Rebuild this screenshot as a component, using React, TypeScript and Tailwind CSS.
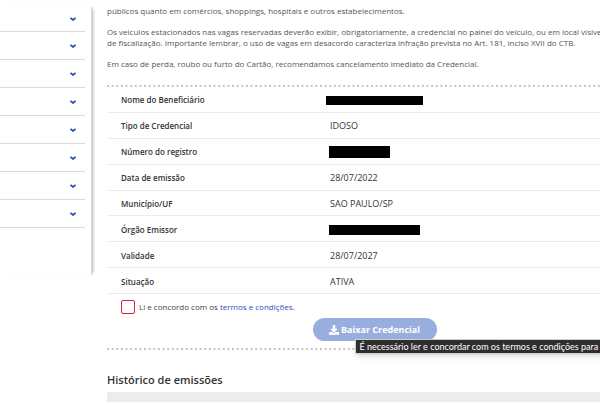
import React from "react";
import { FaDownload } from "react-icons/fa";

const menuItems = [
  "Início",
  "Cadastro",
  "Solicitações",
  "Credenciais",
  "Veículos",
  "Infrações",
  "Notificações",
  "Atendimento",
];

type Row = {
  label: string;
  value?: string;
  redacted?: string;
};

const rows: Row[] = [
  { label: "Nome do Beneficiário", redacted: "-ml-1 h-[9px] w-[97px]" },
  { label: "Tipo de Credencial", value: "IDOSO" },
  { label: "Número do registro", redacted: "-ml-px h-3 w-[61px]" },
  { label: "Data de emissão", value: "28/07/2022" },
  { label: "Município/UF", value: "SAO PAULO/SP" },
  { label: "Órgão Emissor", redacted: "-ml-px h-[10px] w-[91px]" },
  { label: "Validade", value: "28/07/2027" },
  { label: "Situação", value: "ATIVA" },
];

const Chevron: React.FC = () => (
  <svg viewBox="0 0 6 4" className="h-1 w-[6px]" fill="none" aria-hidden="true">
    <path d="M0.4 0.8 3 3 5.6 0.8" stroke="#2347b8" strokeWidth="1.7" />
  </svg>
);

const DottedLine: React.FC = () => (
  <svg className="block h-[2px] w-full" aria-hidden="true">
    <line x1="0" y1="1" x2="100%" y2="1" stroke="#c6c6c6" strokeWidth="2" strokeDasharray="2 2.63" />
  </svg>
);

const Sidebar: React.FC = () => (
  <nav
    aria-label="Menu"
    className="mt-[7px] h-[268px] w-[92px] shrink-0 border-r border-gray-300 pr-[6px] shadow-[3px_0_3px_-2px_rgba(0,0,0,0.3)]"
  >
    {menuItems.map((item) => (
      <button
        key={item}
        type="button"
        aria-label={item}
        className="flex h-7 w-full items-center justify-end border-b border-[#dcdcdc] pr-[9px] first:h-[25px]"
      >
        <Chevron />
      </button>
    ))}
  </nav>
);

const App: React.FC = () => {
  return (
    <div className="flex items-start overflow-hidden bg-white font-['Open_Sans',sans-serif] text-[8px] text-[#333]">
      <Sidebar />

      {/* The content column runs past the right edge of the window */}
      <main className="-mr-[42px] ml-[15px] min-w-0 flex-1 pt-[5px]">
        <div className="mb-4 space-y-[10px] whitespace-nowrap leading-[11px] text-[#555]">
          <p>públicos quanto em comércios, shoppings, hospitais e outros estabelecimentos.</p>
          <p>
            Os veículos estacionados nas vagas reservadas deverão exibir, obrigatoriamente, a credencial no painel do veículo, ou em local visível
            <br />
            de fiscalização. Importante lembrar, o uso de vagas em desacordo caracteriza infração prevista no Art. 181, inciso XVII do CTB.
          </p>
          <p>Em caso de perda, roubo ou furto do Cartão, recomendamos cancelamento imediato da Credencial.</p>
        </div>

        <DottedLine />

        <table className="h-[207px] w-full table-fixed border-separate border-spacing-0 text-left leading-3">
          <tbody>
            {rows.map((row) => (
              <tr key={row.label}>
                <th scope="row" className="w-[223px] border-b border-[#ececef] pl-[14px] pt-[2px] font-semibold">
                  {row.label}
                </th>
                <td className="border-b border-[#ececef] pt-[2px] text-[9px]">
                  {row.redacted ? <div className={`bg-black ${row.redacted}`} /> : row.value}
                </td>
              </tr>
            ))}
          </tbody>
        </table>

        <div className="flex items-center gap-1 pl-[14px] pt-[6px]">
          <input
            id="terms"
            type="checkbox"
            className="size-[14px] appearance-none rounded-[2px] border border-[#e0203a] bg-white"
          />
          <label htmlFor="terms" className="leading-3 text-[#444]">
            Li e concordo com os{" "}
            <a href="#termos" className="text-[#2a50bb]">
              termos e condições.
            </a>
          </label>
        </div>

        <div className="mt-1 flex justify-center">
          <div className="relative">
            <button
              type="button"
              disabled
              aria-describedby="download-hint"
              className="flex h-[23px] w-[124px] items-center justify-center gap-[2px] rounded-full bg-[#98aedf] text-[9px] font-bold text-white"
            >
              <FaDownload className="size-[10px]" />
              Baixar Credencial
            </button>
            <div
              id="download-hint"
              role="tooltip"
              className="absolute left-[42px] top-[21px] whitespace-nowrap border border-[#d0d0d0] bg-[#2e2e2e] px-1 font-['Lato',sans-serif] text-[9px] leading-[13px] text-white shadow-md"
            >
              É necessário ler e concordar com os termos e condições para baixar a credencial.
            </div>
          </div>
        </div>

        <div className="pt-[7px]">
          <DottedLine />
        </div>

        <h2 className="mt-[22px] text-[11px] font-semibold leading-4">Histórico de emissões</h2>
        <div className="mb-[3px] mt-1 h-[10px] bg-[#ececec]" />
      </main>
    </div>
  );
};

export default App;
